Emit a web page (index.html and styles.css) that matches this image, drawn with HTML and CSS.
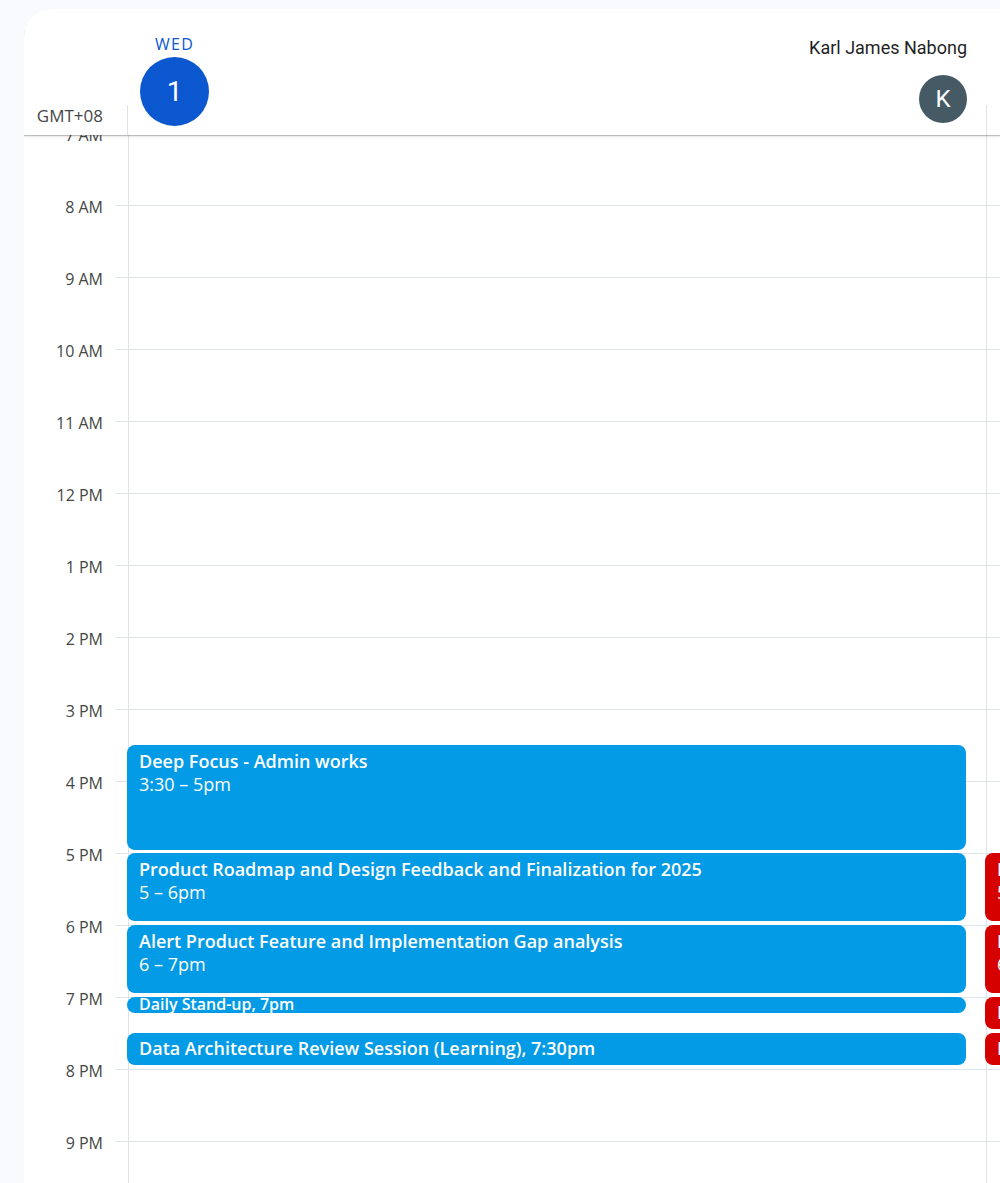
FILE: index.html
```html
<!DOCTYPE html>
<html lang="en">
<head>
  <meta charset="UTF-8" />
  <meta name="viewport" content="width=device-width, initial-scale=1" />
  <title>Calendar - Day view</title>
  <link rel="stylesheet" href="styles.css">
</head>
<body>

  <div class="card">

    <div class="head">
      <div class="head-gutter">GMT+08</div>

      <div class="head-col">
        <div class="day">
          <div class="day-name">WED</div>
          <div class="day-num">1</div>
        </div>
        <div class="person">
          <div class="person-name">Karl James Nabong</div>
          <div class="avatar">K</div>
        </div>
      </div>

      <div class="head-col head-col-2"></div>
    </div>

    <div class="body">
      <div class="gutter">
        <div class="hour">7 AM</div>
        <div class="hour">8 AM</div>
        <div class="hour">9 AM</div>
        <div class="hour">10 AM</div>
        <div class="hour">11 AM</div>
        <div class="hour">12 PM</div>
        <div class="hour">1 PM</div>
        <div class="hour">2 PM</div>
        <div class="hour">3 PM</div>
        <div class="hour">4 PM</div>
        <div class="hour">5 PM</div>
        <div class="hour">6 PM</div>
        <div class="hour">7 PM</div>
        <div class="hour">8 PM</div>
        <div class="hour">9 PM</div>
      </div>

      <div class="tick"></div>

      <!-- events: top = hours after 7 AM * 72 -->
      <div class="col">
        <div class="event" style="top: 612px; height: 105px;">
          <div class="ev-title">Deep Focus - Admin works</div>
          <div class="ev-time">3:30 – 5pm</div>
        </div>
        <div class="event" style="top: 720px; height: 68px;">
          <div class="ev-title">Product Roadmap and Design Feedback and Finalization for 2025</div>
          <div class="ev-time">5 – 6pm</div>
        </div>
        <div class="event" style="top: 792px; height: 68px;">
          <div class="ev-title">Alert Product Feature and Implementation Gap analysis</div>
          <div class="ev-time">6 – 7pm</div>
        </div>
        <div class="event event-tiny" style="top: 864px; height: 16px;">
          <div class="ev-title">Daily Stand-up, 7pm</div>
        </div>
        <div class="event event-short" style="top: 900px; height: 32px;">
          <div class="ev-title">Data Architecture Review Session (Learning), 7:30pm</div>
        </div>
      </div>

      <div class="col col-2">
        <div class="event event-red" style="top: 720px; height: 68px;">
          <div class="ev-title">Busy</div>
          <div class="ev-time">5 – 6pm</div>
        </div>
        <div class="event event-red" style="top: 792px; height: 68px;">
          <div class="ev-title">Busy</div>
          <div class="ev-time">6 – 7pm</div>
        </div>
        <div class="event event-red event-short" style="top: 864px; height: 32px;">
          <div class="ev-title">Busy, 7pm</div>
        </div>
        <div class="event event-red event-short" style="top: 900px; height: 32px;">
          <div class="ev-title">Busy, 7:30pm</div>
        </div>
      </div>
    </div>

  </div>

</body>
</html>
```

FILE: styles.css
```css
* {
  margin: 0;
  padding: 0;
  box-sizing: border-box;
}

body {
  background-color: #f8fafd;
  font-family: 'Open Sans', 'Noto Sans', sans-serif;
  color: #1f1f1f;
  height: 1183px;
  overflow: hidden;
  padding: 9px 0 0 24px;
}

.card {
  width: 976px;
  height: 1174px;
  background-color: #fff;
  border-radius: 28px 0 0 0;
  display: flex;
  flex-direction: column;
  overflow: hidden;
}

/* header */

.head {
  height: 126px;
  flex-shrink: 0;
  display: grid;
  grid-template-columns: 103px 859px 1fr;
  position: relative;
  z-index: 2;
  background-color: #fff;
  box-shadow: 0 1px 1px rgba(60, 64, 67, 0.3), 0 2px 4px rgba(60, 64, 67, 0.08);
}

.head-gutter {
  align-self: end;
  text-align: right;
  padding: 0 24px 9px 0;
  font-size: 17px;
  line-height: 20px;
  color: #444746;
  white-space: nowrap;
}

.head-col {
  display: flex;
  justify-content: space-between;
  padding: 0 19px 0 13px;
  background: linear-gradient(#dde3ea, #dde3ea) no-repeat left bottom / 1px 30px;
}

.head-col-2 {
  padding: 0;
}

.day {
  width: 69px;
  display: flex;
  flex-direction: column;
  align-items: center;
  gap: 4px;
  padding-top: 26px;
}

.day-name {
  font-size: 16px;
  line-height: 18px;
  font-weight: 500;
  letter-spacing: 1.2px;
  color: #0b57d0;
}

.day-num {
  width: 69px;
  height: 69px;
  border-radius: 50%;
  background-color: #0b57d0;
  color: #fff;
  font-family: Roboto, sans-serif;
  font-size: 28px;
  display: flex;
  align-items: center;
  justify-content: center;
}

.person {
  display: flex;
  flex-direction: column;
  align-items: flex-end;
  gap: 15px;
  padding-top: 27px;
}

.person-name {
  font-family: Roboto, sans-serif;
  font-size: 18px;
  line-height: 24px;
  color: #1f1f1f;
  white-space: nowrap;
}

.avatar {
  width: 48px;
  height: 48px;
  border-radius: 50%;
  background-color: #455a64;
  color: #fff;
  font-family: Roboto, sans-serif;
  font-size: 24px;
  display: flex;
  align-items: center;
  justify-content: center;
}

/* time grid */

.body {
  flex: 1;
  display: flex;
  margin-top: -2px;
  overflow: hidden;
}

.gutter {
  width: 92px;
  flex-shrink: 0;
  padding: 0 13px 0 0;
  margin-top: -7px;
}

.hour {
  height: 72px;
  text-align: right;
  font-size: 16px;
  line-height: 18px;
  color: #444746;
  white-space: nowrap;
}

.tick,
.col {
  background-image: repeating-linear-gradient(to bottom, #dde3ea 0, #dde3ea 1px, transparent 1px, transparent 72px);
}

.tick {
  width: 12px;
  flex-shrink: 0;
}

.col {
  width: 858px;
  flex-shrink: 0;
  border-left: 1px solid #dde3ea;
  position: relative;
}

.col-2 {
  flex: 1;
  width: auto;
}

.event {
  position: absolute;
  left: -2px;
  width: 839px;
  background-color: #039be5;
  color: #fff;
  border-radius: 8px;
  padding: 5px 12px;
  overflow: hidden;
  font-size: 18px;
  line-height: 23px;
}

.ev-title {
  font-weight: 600;
  white-space: nowrap;
}

.event-short {
  padding-top: 4px;
}

.event-tiny {
  overflow: visible;
  padding: 0 12px;
  font-size: 16px;
  line-height: 14px;
}

.event-red {
  width: 200px;
  background-color: #d50000;
}
```
